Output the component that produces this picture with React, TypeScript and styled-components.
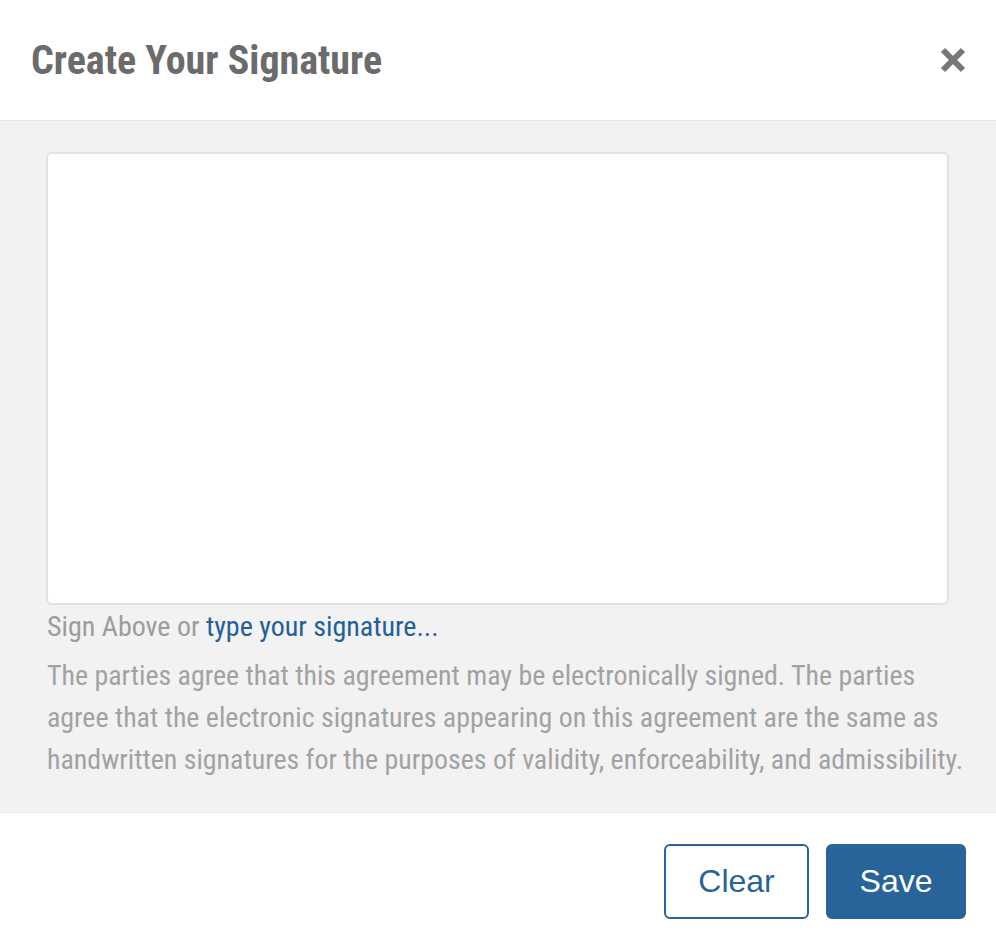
import React from 'react'
import styled, { createGlobalStyle } from 'styled-components'

const Global = createGlobalStyle`
  html, body { margin: 0; padding: 0; background: #fff; }
  body { font-family: "Roboto Condensed", Roboto, "Liberation Sans", sans-serif; }
`

const Modal = styled.div`
  width: 996px;
  height: 948px;
  display: flex;
  flex-direction: column;
  background: #fff;
`

const Header = styled.header`
  height: 121px;
  display: flex;
  align-items: center;
  justify-content: space-between;
  padding: 0 30px 0 31px;
  border-bottom: 1px solid #e6e6e6;
  box-sizing: border-box;
`

const Title = styled.h1`
  margin: 0;
  font-family: "Roboto Condensed", Roboto, sans-serif;
  font-weight: 700;
  font-size: 40px;
  color: #6b6b6b;
`

const CloseBtn = styled.button`
  border: 0;
  background: none;
  padding: 0;
  width: 26px;
  height: 26px;
  cursor: pointer;
  display: flex;
  align-items: center;
  justify-content: center;
`

const Body = styled.section`
  flex: 1;
  background: #f2f2f2;
  padding: 31px 30px 0 46px;
  border-bottom: 1px solid #e6e6e6;
`

const Pad = styled.div`
  width: 903px;
  height: 453px;
  box-sizing: border-box;
  background: #fff;
  border: 2px solid #e2e2e2;
  border-radius: 6px;
`

const Hint = styled.p`
  margin: 4px 0 0 1px;
  font-size: 28px;
  line-height: 36px;
  color: #9c9c9c;
  font-weight: 400;
`

const HintLink = styled.a`
  color: #23609a;
  text-decoration: none;
  cursor: pointer;
`

const Legal = styled.p`
  margin: 10px 0 0 1px;
  font-size: 27.9px;
  line-height: 41.8px;
  color: #a2a2a2;
  font-weight: 400;
  white-space: nowrap;
`

const Footer = styled.footer`
  flex: 0 0 135px;
  display: flex;
  align-items: center;
  justify-content: flex-end;
  gap: 17px;
  padding: 2px 30px 0 0;
  box-sizing: border-box;
`

const Button = styled.button<{ $primary?: boolean }>`
  height: 75px;
  width: ${p => (p.$primary ? '140px' : '145px')};
  padding: 0;
  border-radius: 6px;
  border: 2px solid #28649a;
  background: ${p => (p.$primary ? '#28649a' : '#fff')};
  color: ${p => (p.$primary ? '#fff' : '#28649a')};
  font-family: "Liberation Sans", Arial, sans-serif;
  font-size: 32px;
  cursor: pointer;
`

export default function App() {
  return (
    <Modal>
      <Global />
      <Header>
        <Title>Create Your Signature</Title>
        <CloseBtn aria-label="Close">
          <svg width="26" height="26" viewBox="0 0 26 26">
            <path d="M3 3 L23 23 M23 3 L3 23" stroke="#777" strokeWidth="6" strokeLinecap="butt" />
          </svg>
        </CloseBtn>
      </Header>
      <Body>
        <Pad />
        <Hint>
          Sign Above or <HintLink>type your signature...</HintLink>
        </Hint>
        <Legal>
          The parties agree that this agreement may be electronically signed. The parties
          <br />
          agree that the electronic signatures appearing on this agreement are the same as
          <br />
          handwritten signatures for the purposes of validity, enforceability, and admissibility.
        </Legal>
      </Body>
      <Footer>
        <Button>Clear</Button>
        <Button $primary>Save</Button>
      </Footer>
    </Modal>
  )
}
